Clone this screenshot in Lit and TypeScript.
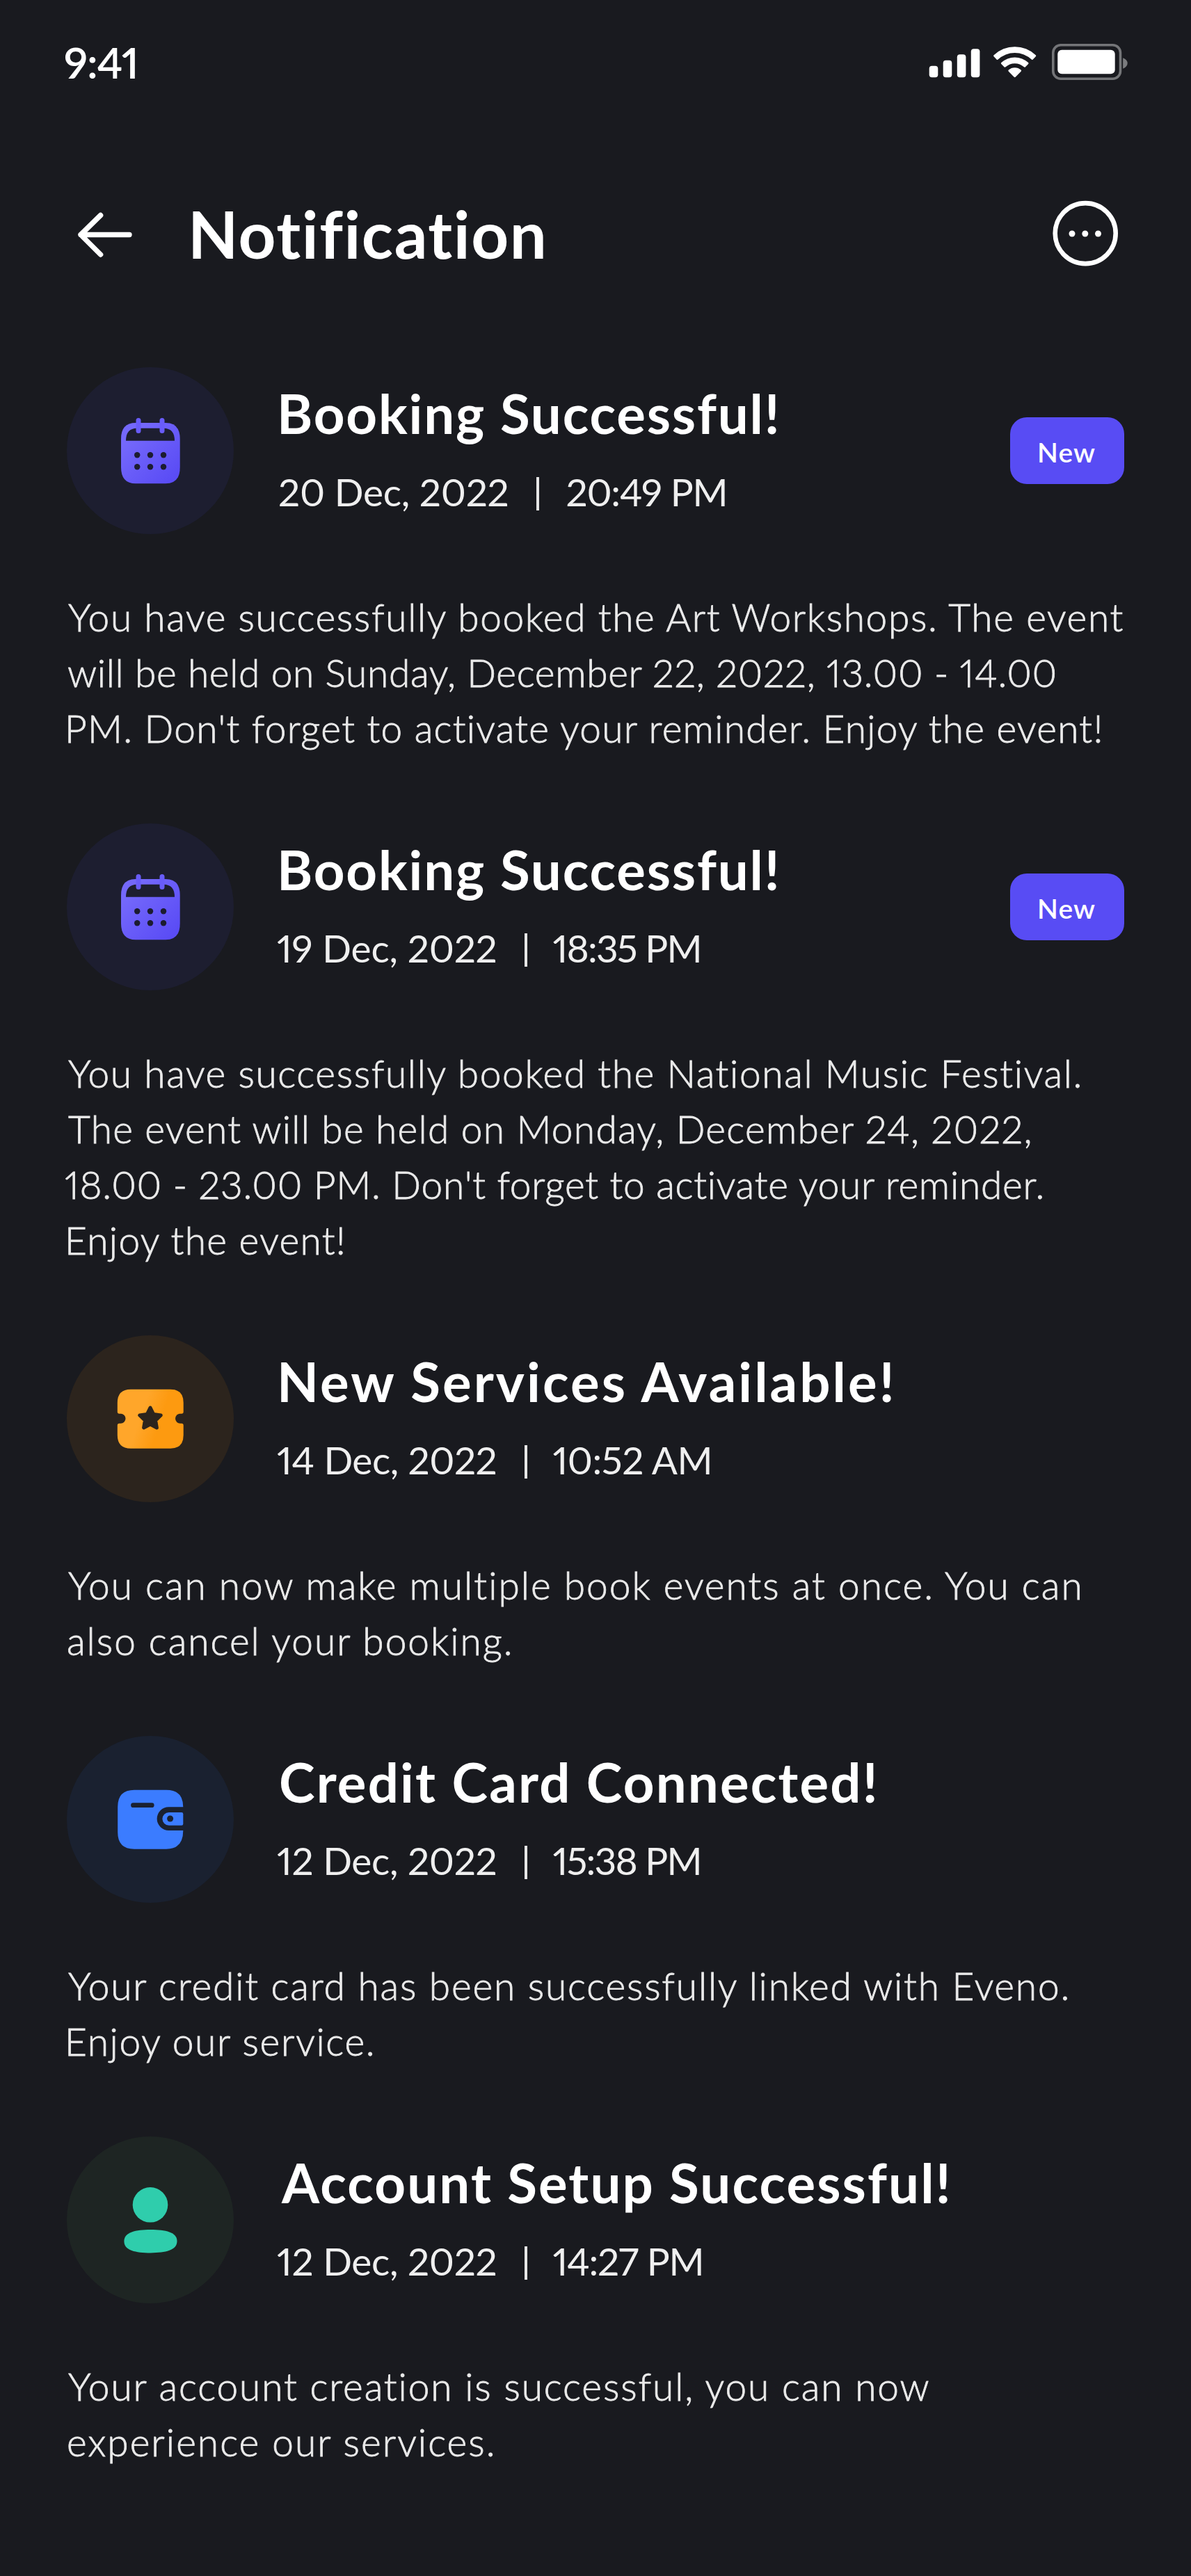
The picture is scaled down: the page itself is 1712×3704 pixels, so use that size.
import { LitElement, html, css, svg, TemplateResult } from "lit";
import { customElement, property, query, state } from "lit/decorators.js";
import { styleMap } from "lit/directives/style-map.js";
import { classMap } from "lit/directives/class-map.js";

/** One line of text whose tracking is tuned so its ink spans `span` pixels. */
@customElement("tracked-line")
class TrackedLine extends LitElement {
  static styles = css`
    :host { display: block; white-space: pre; font-variant-ligatures: none; font-variant-numeric: proportional-nums; }
    .ink { display: inline-block; white-space: pre; letter-spacing: 0.01px; }
  `;
  @property() text = "";
  @property({ type: Number }) span = 0;
  @state() private tracking = 0.01;
  @state() private bearing = 0;
  @query(".ink") private inkEl!: HTMLElement;

  firstUpdated() {
    const cs = getComputedStyle(this);
    const ctx = document.createElement("canvas").getContext("2d")!;
    ctx.font = `${cs.fontWeight} ${cs.fontSize} ${cs.fontFamily}`;
    const first = ctx.measureText(this.text[0]);
    const last = ctx.measureText(this.text[this.text.length - 1]);
    const left = -first.actualBoundingBoxLeft;
    const right = last.width - last.actualBoundingBoxRight;
    const ink = this.inkEl.getBoundingClientRect().width - left - right;
    this.bearing = -left;
    this.tracking = (this.span - ink) / (this.text.length - 1);
  }

  render() {
    const box = { width: `${this.span}px` };
    const ink = { letterSpacing: `${this.tracking}px`, marginLeft: `${this.bearing}px` };
    return html`<div style=${styleMap(box)}><span class="ink" style=${styleMap(ink)}>${this.text}</span></div>`;
  }
}

type Line = [string, number];
type Kind = "calendar" | "ticket" | "wallet" | "profile";
interface Notice {
  kind: Kind;
  title: Line;
  date: Line;
  time: Line;
  fresh: boolean;
  body: Line[];
}

const NOTICES: Notice[] = [
  {
    kind: "calendar", title: ["Booking Successful!", 712], date: ["20 Dec, 2022", 327], time: ["20:49 PM", 227], fresh: true,
    body: [
      ["You have successfully booked the Art Workshops. The event", 1516],
      ["will be held on Sunday, December 22, 2022, 13.00 - 14.00", 1420],
      ["PM. Don't forget to activate your reminder. Enjoy the event!", 1484],
    ],
  },
  {
    kind: "calendar", title: ["Booking Successful!", 712], date: ["19 Dec, 2022", 310], time: ["18:35 PM", 207], fresh: true,
    body: [
      ["You have successfully booked the National Music Festival.", 1454],
      ["The event will be held on Monday, December 24, 2022,", 1383],
      ["18.00 - 23.00 PM. Don't forget to activate your reminder.", 1400],
      ["Enjoy the event!", 395],
    ],
  },
  {
    kind: "ticket", title: ["New Services Available!", 877], date: ["14 Dec, 2022", 310], time: ["10:52 AM", 222], fresh: false,
    body: [
      ["You can now make multiple book events at once. You can", 1455],
      ["also cancel your booking.", 635],
    ],
  },
  {
    kind: "wallet", title: ["Credit Card Connected!", 853], date: ["12 Dec, 2022", 310], time: ["15:38 PM", 207], fresh: false,
    body: [
      ["Your credit card has been successfully linked with Eveno.", 1436],
      ["Enjoy our service.", 437],
    ],
  },
  {
    kind: "profile", title: ["Account Setup Successful!", 958], date: ["12 Dec, 2022", 310], time: ["14:27 PM", 210], fresh: false,
    body: [
      ["Your account creation is successful, you can now", 1237],
      ["experience our services.", 610],
    ],
  },
];

const star = Array.from({ length: 10 }, (_, i) => {
  const r = i % 2 ? 8 : 16;
  const a = -Math.PI / 2 + (i * Math.PI) / 5;
  return `${(120 + r * Math.cos(a)).toFixed(2)},${(120 + r * Math.sin(a)).toFixed(2)}`;
}).join(" ");

const GLYPHS: Record<Kind, TemplateResult> = {
  calendar: svg`
    <defs><linearGradient id="cal" x1="0" y1="0" x2="1" y2="1">
      <stop offset="0.2" stop-color="#7468fb"/><stop offset="0.9" stop-color="#5a4cf5"/></linearGradient></defs>
    <path fill="url(#cal)" d="M99 80H142Q162.700 80 162.700 103V144Q162.700 167.300 142 167.300H99Q78 167.300 78 144V103Q78 80 99 80Z"/>
    <path fill="#1d1e30" d="M85 105.700Q85 87.700 101 87.700H139Q155 87.700 155 105.700Z"/>
    <path stroke="#695cfa" stroke-width="7" stroke-linecap="round" d="M103 76.500V91.500M137 76.500V91.500"/>
    <g fill="#1c1c30">
      <circle cx="101.200" cy="126.300" r="4.200"/><circle cx="120" cy="126.300" r="4.200"/><circle cx="139" cy="126.300" r="4.200"/>
      <circle cx="101.200" cy="143.300" r="4.200"/><circle cx="120" cy="143.300" r="4.200"/><circle cx="139" cy="143.300" r="4.200"/>
    </g>`,
  ticket: svg`
    <defs><linearGradient id="tic" x1="0" y1="0.350" x2="1" y2="0.650">
      <stop offset="0.350" stop-color="#ffa62a"/><stop offset="0.650" stop-color="#fd9a10"/></linearGradient></defs>
    <path fill="url(#tic)" d="M92 77.700H149Q167.700 77.700 167.700 97V110Q167.700 112.700 165 112.700H163A7 7 0 0 0 163 126.700H165Q167.700 126.700 167.700 129.500V143.500Q167.700 162.700 149 162.700H92Q72.800 162.700 72.800 143.500V129.500Q72.800 126.700 75.500 126.700H77.500A7 7 0 0 0 77.500 112.700H75.500Q72.800 112.700 72.800 110V97Q72.800 77.700 92 77.700Z"/>
    <polygon fill="#2c241d" stroke="#2c241d" stroke-width="5" stroke-linejoin="round" points=${star}/>`,
  wallet: svg`
    <path fill="#3b7cff" d="M97 77.700H143Q167.300 77.700 167.300 102.300H146.500A16.850 16.850 0 0 0 146.500 136H167.300Q167.300 162.700 143 162.700H97Q73.200 162.700 73.200 138.500V102Q73.200 77.700 97 77.700Z"/>
    <path fill="#3b7cff" d="M146.800 110H165Q167.300 110 167.300 112.300V126.400Q167.300 128.700 165 128.700H146.800A9.350 9.350 0 0 1 146.800 110Z"/>
    <circle cx="148.600" cy="119" r="4.500" fill="#1a2130"/>
    <path stroke="#1a2130" stroke-width="6.800" stroke-linecap="round" d="M95.500 99.700H122.200"/>`,
  profile: svg`
    <g fill="#2fcdac"><circle cx="120" cy="98.300" r="25.300"/>
    <path d="M120.400 134C142 134 158.500 137.500 158.500 150.600S142 167.400 120.400 167.400 82.400 163.800 82.400 150.700 99 134 120.400 134Z"/></g>`,
};

@customElement("notice-card")
class NoticeCard extends LitElement {
  static styles = css`
    :host { display: block; }
    .head { display: flex; align-items: flex-start; height: 240px; }
    .disc { width: 240px; height: 240px; border-radius: 50%; flex: none; }
    .disc svg { display: block; }
    .calendar { background: #1d1e30; }
    .ticket { background: #2c241d; }
    .wallet { background: #1a2130; }
    .profile { background: #1e2523; }
    .info { display: flex; flex-direction: column; gap: 33px; padding: 18px 0 0 68px; flex: 1; }
    .title { margin: 0; font-size: 78px; line-height: 96px; font-weight: 700; color: #fff; }
    .when { display: flex; align-items: center; font-size: 55px; line-height: 64px; font-weight: 400; color: #efefef; margin-left: -2px; }
    .rule { width: 3.5px; height: 48px; margin: 5px 41px 0 42px; background: #e6e6e6; }
    .badge {
      align-self: center; width: 164px; height: 96px; border-radius: 24px; background: #584cf4;
      display: flex; align-items: center; justify-content: center;
      color: #fff; font-size: 39px; line-height: 48px; font-weight: 600; box-sizing: border-box; padding-top: 3px;
    }
    .body {
      margin: 79px 0 0; padding: 0 0 97px 2px; font-size: 55px; line-height: 80px; font-weight: 300;
      color: #eaeaea; -webkit-text-stroke: 0.8px #eaeaea;
    }
  `;
  @property({ attribute: false }) notice!: Notice;

  render() {
    const n = this.notice;
    return html`
      <div class="head">
        <div class=${classMap({ disc: true, [n.kind]: true })}>
          <svg width="240" height="240" viewBox="0 0 240 240" fill="none">${GLYPHS[n.kind]}</svg>
        </div>
        <div class="info">
          <h2 class="title"><tracked-line .text=${n.title[0]} .span=${n.title[1]}></tracked-line></h2>
          <div class="when">
            <tracked-line .text=${n.date[0]} .span=${n.date[1]}></tracked-line>
            <span class="rule"></span>
            <tracked-line .text=${n.time[0]} .span=${n.time[1]}></tracked-line>
          </div>
        </div>
        ${n.fresh ? html`<div class="badge"><tracked-line .text=${"New"} .span=${80}></tracked-line></div>` : ""}
      </div>
      <p class="body">${n.body.map(([t, w]) => html`<tracked-line .text=${t} .span=${w}></tracked-line>`)}</p>
    `;
  }
}

@customElement("app-root")
class AppRoot extends LitElement {
  static styles = css`
    :host {
      display: block; width: 1712px; height: 3704px; box-sizing: border-box; overflow: hidden;
      background: #191a1f; color: #fff; font-family: Lato, "Open Sans", sans-serif;
    }
    .status { display: flex; justify-content: space-between; align-items: center; height: 176px; padding: 2px 88px 0 94px; box-sizing: border-box; }
    .clock { font-size: 62px; line-height: 76px; font-weight: 600; }
    .bar { display: flex; align-items: center; height: 192px; margin-top: 64px; padding: 0 96px 0 104px; }
    .heading { margin: 0 auto 0 77px; font-size: 94px; line-height: 112px; font-weight: 700; }
    .list { padding: 96px 96px 0; }
    svg { display: block; flex: none; }
  `;

  render() {
    return html`
      <div class="status">
        <div class="clock"><tracked-line .text=${"9:41"} .span=${102}></tracked-line></div>
        <svg width="294" height="60" viewBox="1330 60 294 60" fill="#fff">
          <rect x="1335.700" y="95.700" width="12.600" height="16.600" rx="4"/>
          <rect x="1355.700" y="87.700" width="12.600" height="24.600" rx="4"/>
          <rect x="1375.800" y="79.300" width="12.600" height="33" rx="4"/>
          <rect x="1395.800" y="71.300" width="12.600" height="41" rx="4"/>
          <path d="M1428.600 80.300A43.500 43.500 0 0 1 1488.800 80.300Q1489.700 81.300 1488.800 82.300L1484.500 86.700Q1483.700 87.400 1482.800 86.600A35 35 0 0 0 1434.600 86.600Q1433.700 87.400 1432.800 86.700L1428.600 82.300Q1427.600 81.300 1428.600 80.300Z"/>
          <path d="M1439.300 91.100A28.500 28.500 0 0 1 1478.100 91.100Q1479.100 92.100 1478.100 93.100L1473.700 97.400Q1472.900 98.100 1471.900 97.300A19.500 19.500 0 0 0 1445.500 97.300Q1444.500 98.100 1443.700 97.400L1439.300 93.100Q1438.300 92.100 1439.300 91.100Z"/>
          <path d="M1449.800 101.600A13.500 13.500 0 0 1 1467.600 101.600Q1468.700 102.700 1467.600 103.800L1459.700 111.700Q1458.700 112.600 1457.700 111.700L1449.800 103.800Q1448.700 102.700 1449.800 101.600Z"/>
          <rect x="1513.800" y="65.800" width="96.700" height="48.400" rx="11" fill="none" stroke="#747578" stroke-width="3.600"/>
          <path d="M1614.200 84.300Q1620.700 87 1620.700 92T1614.200 99.700Z" fill="#7b7c7f"/>
          <rect x="1520.300" y="72.700" width="82.400" height="34.600" rx="6"/>
        </svg>
      </div>
      <div class="bar">
        <svg width="96" height="96" viewBox="104 288 96 96" fill="none" stroke="#fff" stroke-width="7.400" stroke-linecap="round" stroke-linejoin="round">
          <path d="M186 337.500H116M144.600 309.500L116 337.500L144.600 366"/>
        </svg>
        <h1 class="heading"><tracked-line .text=${"Notification"} .span=${504}></tracked-line></h1>
        <svg width="112" height="112" viewBox="1504 280 112 112" fill="#fff">
          <circle cx="1560.200" cy="335.600" r="43.500" fill="none" stroke="#fff" stroke-width="6.600"/>
          <circle cx="1541" cy="336" r="4.500"/><circle cx="1559.800" cy="336" r="4.500"/><circle cx="1578.500" cy="336" r="4.500"/>
        </svg>
      </div>
      <div class="list">${NOTICES.map((n) => html`<notice-card .notice=${n}></notice-card>`)}</div>
    `;
  }
}
